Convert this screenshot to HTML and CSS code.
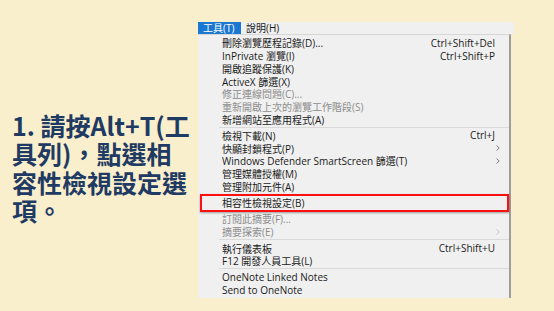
FILE: index.html
```html
<!DOCTYPE html>
<html lang="zh-Hant">

<head>
    <meta charset="UTF-8">
    <meta name="viewport" content="width=device-width, initial-scale=1.0">
    <title>相容性檢視設定</title>
    <link rel="stylesheet" href="styles.css">
</head>

<body>

    <div class="slide">
        <p class="note">1. 請按Alt+T(工具列)，點選相容性檢視設定選項。</p>

        <!-- IE 工具選單 -->
        <div class="menu">
            <div class="menubar">
                <span class="top active">工具(T)</span>
                <span class="top">說明(H)</span>
            </div>
            <ul class="dropdown">
                <li class="item"><span class="label">刪除瀏覽歷程記錄(D)...</span><span class="key">Ctrl+Shift+Del</span></li>
                <li class="item"><span class="label">InPrivate 瀏覽(I)</span><span class="key">Ctrl+Shift+P</span></li>
                <li class="item"><span class="label">開啟追蹤保護(K)</span></li>
                <li class="item"><span class="label">ActiveX 篩選(X)</span></li>
                <li class="item disabled"><span class="label">修正連線問題(C)...</span></li>
                <li class="item disabled"><span class="label">重新開啟上次的瀏覽工作階段(S)</span></li>
                <li class="item"><span class="label">新增網站至應用程式(A)</span></li>
                <li class="sep"></li>
                <li class="item"><span class="label">檢視下載(N)</span><span class="key">Ctrl+J</span></li>
                <li class="item"><span class="label">快顯封鎖程式(P)</span><span class="arrow"><svg width="4" height="6" viewBox="0 0 4 6"><path d="M0.5 0.5 L3.2 3 L0.5 5.5" fill="none" stroke="currentColor" stroke-width="0.9"/></svg></span></li>
                <li class="item"><span class="label">Windows Defender SmartScreen 篩選(T)</span><span class="arrow"><svg width="4" height="6" viewBox="0 0 4 6"><path d="M0.5 0.5 L3.2 3 L0.5 5.5" fill="none" stroke="currentColor" stroke-width="0.9"/></svg></span></li>
                <li class="item"><span class="label">管理媒體授權(M)</span></li>
                <li class="item"><span class="label">管理附加元件(A)</span></li>
                <li class="sep"></li>
                <li class="item marked"><span class="label">相容性檢視設定(B)</span></li>
                <li class="sep"></li>
                <li class="item disabled"><span class="label">訂閱此摘要(F)...</span></li>
                <li class="item disabled"><span class="label">摘要探索(E)</span><span class="arrow"><svg width="4" height="6" viewBox="0 0 4 6"><path d="M0.5 0.5 L3.2 3 L0.5 5.5" fill="none" stroke="currentColor" stroke-width="0.9"/></svg></span></li>
                <li class="sep"></li>
                <li class="item"><span class="label">執行儀表板</span><span class="key">Ctrl+Shift+U</span></li>
                <li class="item"><span class="label">F12 開發人員工具(L)</span></li>
                <li class="sep"></li>
                <li class="item"><span class="label">OneNote Linked Notes</span></li>
                <li class="item"><span class="label">Send to OneNote</span></li>
            </ul>
        </div>
    </div>

</body>

</html>
```

FILE: styles.css
```css
body {
    margin: 0;
    padding: 0;
    background-color: #f9efcc;
    font-family: 'Noto Sans CJK TC', sans-serif;
    overflow: hidden;
}

.slide {
    display: flex;
    align-items: flex-start;
    width: 554px;
    height: 311px;
    padding-top: 22px;
    box-sizing: border-box;
}

/* 左側說明文字 */
.note {
    width: 179px;
    margin: 89px 7px 0 12px;
    font-size: 25px;
    font-weight: bold;
    line-height: 28.3px;
    color: #1f3a63;
    word-break: break-all;
}

/* 選單 */
.menu {
    width: 316px;
    font-family: 'Open Sans', 'Noto Sans CJK TC', sans-serif;
    font-size: 10px;
    color: #1a1a1a;
}

.menubar {
    display: flex;
    height: 12px;
    background-color: #f0f0f0;
    line-height: 12px;
}

.top {
    padding: 0 5px;
}

.top.active {
    width: 33px;
    background-color: #1a78d2;
    color: #fff;
}

.dropdown {
    list-style: none;
    width: 311px;
    margin: 0;
    padding: 1.6px 0 2px;
    background-color: #f0f0f0;
    border-top: 1px solid #d6d6d6;
    border-right: 2px solid #9d9d9d;
}

.item {
    display: flex;
    align-items: center;
    height: 12.7px;
    padding: 0 9px 0 24px;
}

.label {
    flex: 1;
    white-space: nowrap;
}

.key {
    margin-right: 5px;
}

.arrow {
    display: flex;
    color: #6e6e6e;
}

.disabled {
    color: #8c8c8c;
}

.disabled .arrow {
    color: #bdbdbd;
}

.sep {
    height: 1px;
    margin: 1.35px 0 1.35px 21px;
    background-color: #d9d9d9;
}

/* 紅框標示 */
.marked {
    position: relative;
}

.marked::after {
    content: '';
    position: absolute;
    top: -2.5px;
    bottom: -3px;
    left: 2px;
    right: 0;
    border: 2.5px solid #ff1010;
    box-shadow: 0 1px 2px rgba(0, 0, 0, 0.35);
}
```
